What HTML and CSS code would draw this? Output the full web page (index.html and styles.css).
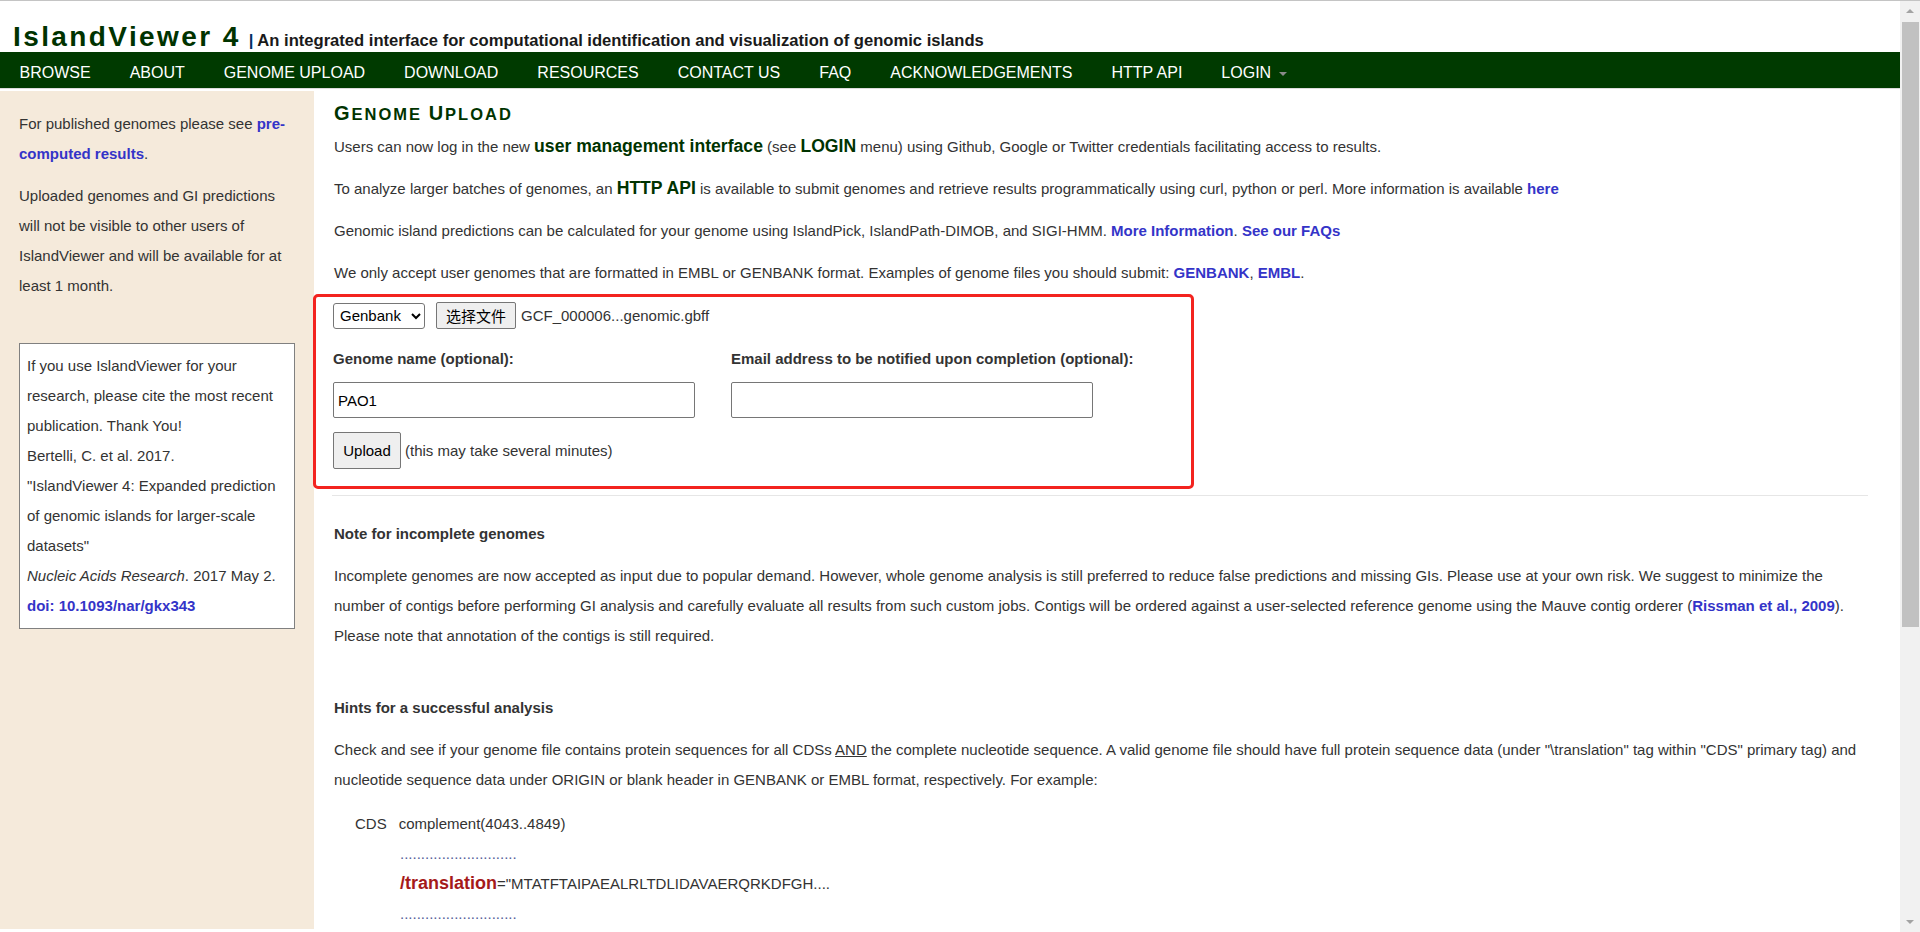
FILE: index.html
```html
<!DOCTYPE html>
<html lang="en">
<head>
<meta charset="utf-8">
<title>IslandViewer 4 - Genome Upload</title>
<link rel="stylesheet" href="styles.css">
</head>
<body>
<div class="window">
  <div class="page">
    <header class="masthead">
      <h1 class="brand">IslandViewer 4</h1>
      <span class="tagline"><span class="bar">|</span> An integrated interface for computational identification and visualization of genomic islands</span>
    </header>
    <nav class="topnav">
      <a class="nav-item">BROWSE</a>
      <a class="nav-item">ABOUT</a>
      <a class="nav-item">GENOME UPLOAD</a>
      <a class="nav-item">DOWNLOAD</a>
      <a class="nav-item">RESOURCES</a>
      <a class="nav-item">CONTACT US</a>
      <a class="nav-item">FAQ</a>
      <a class="nav-item">ACKNOWLEDGEMENTS</a>
      <a class="nav-item">HTTP API</a>
      <a class="nav-item">LOGIN <span class="caret"></span></a>
    </nav>
    <div class="layout">
      <aside class="sidebar">
        <p>For published genomes please see <a class="link">pre-computed results</a>.</p>
        <p>Uploaded genomes and GI predictions will not be visible to other users of IslandViewer and will be available for at least 1 month.</p>
        <div class="cite">
          If you use IslandViewer for your research, please cite the most recent publication. Thank You!<br>
          Bertelli, C. et al. 2017.<br>
          "IslandViewer 4: Expanded prediction of genomic islands for larger-scale datasets"<br>
          <em>Nucleic Acids Research</em>. 2017 May 2.<br>
          <a class="link">doi: 10.1093/nar/gkx343</a>
        </div>
      </aside>
      <main class="content">
        <h2 class="page-title"><span class="cap">G</span>ENOME <span class="cap">U</span>PLOAD</h2>
        <p>Users can now log in the new <strong class="em-green">user management interface</strong> (see <strong class="em-green">LOGIN</strong> menu) using Github, Google or Twitter credentials facilitating access to results.</p>
        <p>To analyze larger batches of genomes, an <strong class="em-green">HTTP API</strong> is available to submit genomes and retrieve results programmatically using curl, python or perl. More information is available <a class="link">here</a></p>
        <p>Genomic island predictions can be calculated for your genome using IslandPick, IslandPath-DIMOB, and SIGI-HMM. <a class="link">More Information</a>. <a class="link">See our FAQs</a></p>
        <p>We only accept user genomes that are formatted in EMBL or GENBANK format. Examples of genome files you should submit: <a class="link">GENBANK</a>, <a class="link">EMBL</a>.</p>

        <form class="upload-box">
          <div class="file-row">
            <select class="format-select">
              <option>Genbank</option>
              <option>EMBL</option>
            </select>
            <button type="button" class="file-btn">选择文件</button>
            <span class="file-name">GCF_000006...genomic.gbff</span>
          </div>
          <div class="fields">
            <label class="field">
              <span class="field-label">Genome name (optional):</span>
              <input class="text-input" type="text" value="PAO1">
            </label>
            <label class="field">
              <span class="field-label">Email address to be notified upon completion (optional):</span>
              <input class="text-input" type="text" value="">
            </label>
          </div>
          <div class="submit-row">
            <button type="button" class="upload-btn">Upload</button>
            <span class="submit-note">(this may take several minutes)</span>
          </div>
        </form>

        <hr class="divider">

        <h4 class="section-head first">Note for incomplete genomes</h4>
        <p>Incomplete genomes are now accepted as input due to popular demand. However, whole genome analysis is still preferred to reduce false predictions and missing GIs. Please use at your own risk. We suggest to minimize the number of contigs before performing GI analysis and carefully evaluate all results from such custom jobs. Contigs will be ordered against a user-selected reference genome using the Mauve contig orderer (<a class="link">Rissman et al., 2009</a>). Please note that annotation of the contigs is still required.</p>

        <h4 class="section-head">Hints for a successful analysis</h4>
        <p>Check and see if your genome file contains protein sequences for all CDSs <u>AND</u> the complete nucleotide sequence. A valid genome file should have full protein sequence data (under "\translation" tag within "CDS" primary tag) and nucleotide sequence data under ORIGIN or blank header in GENBANK or EMBL format, respectively. For example:</p>

        <div class="example">
          <div class="ex-row"><span class="ex-key">CDS</span><span>complement(4043..4849)</span></div>
          <div class="ex-sub dots">............................</div>
          <div class="ex-sub"><span class="tag-red">/translation</span>="MTATFTAIPAEALRLTDLIDAVAERQRKDFGH....</div>
          <div class="ex-sub dots">............................</div>
        </div>
      </main>
    </div>
  </div>
  <div class="scrollbar">
    <div class="sb-btn"><span class="sb-arrow up"></span></div>
    <div class="sb-track"><div class="sb-thumb"></div></div>
    <div class="sb-btn"><span class="sb-arrow down"></span></div>
  </div>
</div>
</body>
</html>
```

FILE: styles.css
```css
html, body {
  margin: 0;
  height: 100%;
  overflow: hidden;
}

body {
  box-sizing: border-box;
  border-top: 1px solid #c4c4c4;
  background: #fff;
  color: #333;
  font-family: "Liberation Sans", Arial, sans-serif;
  font-size: 15px;
}

.window {
  display: flex;
  height: 931px;
}

.page {
  flex: 1;
  min-width: 0;
  overflow: hidden;
}

/* ---------- header ---------- */
.masthead {
  display: flex;
  align-items: baseline;
  height: 51px;
  box-sizing: border-box;
  padding: 20px 0 0 13px;
}

.brand {
  margin: 0;
  font-size: 28px;
  line-height: 31px;
  font-weight: bold;
  letter-spacing: 2.4px;
  color: #003300;
  white-space: nowrap;
}

.tagline {
  margin-left: 8px;
  font-size: 16.6px;
  font-weight: bold;
  color: #1a1a1a;
  white-space: nowrap;
}

.tagline .bar {
  color: #003366;
}

/* ---------- nav ---------- */
.topnav {
  display: flex;
  height: 37px;
  box-sizing: border-box;
  padding-top: 5px;
  background: #003a00;
  border-bottom: 1px solid #dcdcdc;
  margin-bottom: 2px;
}

.nav-item {
  padding: 0 19.5px;
  font-size: 16px;
  line-height: 31px;
  color: #fff;
  white-space: nowrap;
}

.caret {
  display: inline-block;
  width: 0;
  height: 0;
  margin-left: 3px;
  vertical-align: middle;
  border-top: 4px solid #8a8a8a;
  border-left: 4px solid transparent;
  border-right: 4px solid transparent;
}

/* ---------- layout ---------- */
.layout {
  display: flex;
  align-items: stretch;
}

.sidebar {
  width: 314px;
  flex: none;
  box-sizing: border-box;
  padding: 18px 19px;
  background: #f5eadb;
}

.sidebar p {
  margin: 0 0 12px;
  line-height: 30px;
}

.cite {
  margin-top: 42px;
  padding: 7px 7px 7px;
  border: 1px solid #808080;
  background: #fff;
  line-height: 30px;
}

.link {
  color: #3434c8;
  font-weight: bold;
  text-decoration: none;
}

.content {
  flex: 1;
  min-width: 0;
  padding: 0 32px 0 20px;
}

.content p {
  margin: 0 0 12px;
  line-height: 30px;
}

.page-title {
  margin: 10px 0 6px;
  font-size: 16.5px;
  line-height: 24px;
  font-weight: bold;
  letter-spacing: 2px;
  color: #003300;
}

.page-title .cap {
  font-size: 20px;
}

.em-green {
  font-size: 17.6px;
  line-height: 1;
  color: #003300;
}

/* ---------- upload form ---------- */
.upload-box {
  width: 881px;
  box-sizing: border-box;
  margin: -6px 0 0 -21px;
  padding: 5px 17px 17px;
  border: 3px solid #f3231f;
  border-radius: 5px;
}

.file-row {
  display: flex;
  align-items: center;
  height: 27px;
}

.format-select {
  width: 92px;
  height: 26px;
  margin: 0 11px 0 0;
  padding: 0 2px;
  border: 1px solid #767676;
  border-radius: 3px;
  background: #fff;
  color: #000;
  font-family: "Liberation Sans", Arial, sans-serif;
  font-size: 15px;
}

.file-btn {
  width: 80px;
  height: 27px;
  margin: 0 5px 0 0;
  padding: 0;
  border: 1px solid #767676;
  border-radius: 2px;
  background: #efefef;
  color: #000;
  font-family: "Liberation Sans", "Noto Sans CJK SC", sans-serif;
  font-size: 15px;
}

.file-name {
  color: #333;
}

.fields {
  display: flex;
  gap: 36px;
  margin-top: 15px;
}

.field {
  display: flex;
  flex-direction: column;
  gap: 8px;
  width: 362px;
}

.field-label {
  font-weight: bold;
  line-height: 30px;
  white-space: nowrap;
}

.text-input {
  height: 36px;
  box-sizing: border-box;
  margin: 0;
  padding: 0 4px;
  border: 1px solid #767676;
  border-radius: 2px;
  color: #000;
  font-family: "Liberation Sans", Arial, sans-serif;
  font-size: 15px;
}

.submit-row {
  display: flex;
  align-items: center;
  margin-top: 14px;
}

.upload-btn {
  width: 68px;
  height: 37px;
  margin: 0 4px 0 0;
  padding: 0;
  border: 1px solid #767676;
  border-radius: 2px;
  background: #efefef;
  color: #000;
  font-family: "Liberation Sans", Arial, sans-serif;
  font-size: 15px;
}

.divider {
  margin: 6px 0 0 -2px;
  border: 0;
  border-top: 1px solid #e6e6e6;
  height: 0;
}

.section-head {
  margin: 42px 0 12px;
  font-size: 15px;
  line-height: 30px;
  font-weight: bold;
}

.section-head.first {
  margin-top: 23px;
}

/* ---------- example ---------- */
.example {
  padding: 2px 0 0 21px;
  line-height: 30px;
}

.ex-row {
  display: flex;
  gap: 12px;
}

.ex-sub {
  padding-left: 45px;
}

.dots {
  color: #556099;
}

.tag-red {
  font-size: 18px;
  line-height: 1;
  font-weight: bold;
  color: #a51a1a;
}

/* ---------- fake scrollbar ---------- */
.scrollbar {
  width: 20px;
  flex: none;
  display: flex;
  flex-direction: column;
  background: #f1f1f1;
}

.sb-btn {
  height: 20px;
  display: flex;
  align-items: center;
  justify-content: center;
  flex: none;
}

.sb-arrow {
  width: 0;
  height: 0;
  border-left: 4px solid transparent;
  border-right: 4px solid transparent;
}

.sb-arrow.up {
  border-bottom: 4px solid #a3a3a3;
}

.sb-arrow.down {
  border-top: 4px solid #a3a3a3;
}

.sb-track {
  flex: 1;
  padding-top: 1px;
}

.sb-thumb {
  width: 17px;
  height: 605px;
  margin-left: 2px;
  background: #c1c1c1;
}
```
